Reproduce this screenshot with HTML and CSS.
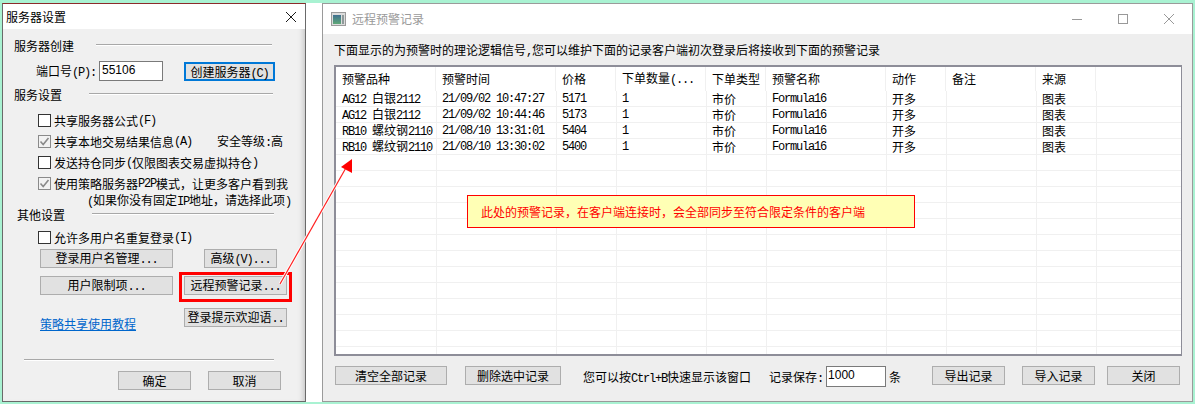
FILE: index.html
```html
<!DOCTYPE html>
<html lang="zh-CN">
<head>
    <meta charset="UTF-8">
    <title>远程预警记录</title>
    <link rel="stylesheet" href="styles.css">
</head>
<body>
    <div class="desktop">
        <!-- 服务器设置 -->
        <div class="dialog">
            <div class="dialog-title">
                <span>服务器设置</span>
                <svg class="dialog-close" width="12" height="12" viewBox="0 0 12 12"><path d="M1 1 L11 11 M11 1 L1 11" stroke="#1a1a1a" fill="none"/></svg>
            </div>
            <div class="dialog-body">
                <div class="group-head group-first">
                    <span>服务器创建</span><i class="group-line"></i>
                </div>
                <div class="port-row">
                    <span class="port-label">端口号<span class="en">(P):</span></span>
                    <div class="edit port-edit">55106</div>
                    <button class="btn btn-default">创建服务器<span class="en">(C)</span></button>
                </div>

                <div class="group-head group-second">
                    <span>服务设置</span><i class="group-line"></i>
                </div>
                <div class="check-list">
                    <div class="check"><i class="box"></i>共享服务器公式<span class="en">(F)</span></div>
                    <div class="check"><i class="box checked"><svg width="13" height="13" viewBox="0 0 13 13"><path d="M2.5 6.5 L5.2 9.5 L10.5 3" stroke="#8a8a8a" stroke-width="1.6" fill="none"/></svg></i>共享本地交易结果信息<span class="en">(A)</span><span class="level">安全等级<span class="en">:</span>高</span></div>
                    <div class="check"><i class="box"></i>发送持仓同步<span class="en">(</span>仅限图表交易虚拟持仓<span class="en">)</span></div>
                    <div class="check"><i class="box checked"><svg width="13" height="13" viewBox="0 0 13 13"><path d="M2.5 6.5 L5.2 9.5 L10.5 3" stroke="#8a8a8a" stroke-width="1.6" fill="none"/></svg></i>使用策略服务器<span class="en">P2P</span>模式，让更多客户看到我</div>
                </div>
                <div class="check-note"><span class="en">(</span>如果你没有固定<span class="en">IP</span>地址，请选择此项<span class="en">)</span></div>

                <div class="group-head group-other">
                    <span>其他设置</span><i class="group-line"></i>
                </div>
                <div class="check check-single"><i class="box"></i>允许多用户名重复登录<span class="en">(I)</span></div>

                <div class="btn-row btn-row-a">
                    <button class="btn btn-wide">登录用户名管理<span class="en">...</span></button>
                    <button class="btn btn-small">高级<span class="en">(V)...</span></button>
                </div>
                <div class="btn-row btn-row-b">
                    <button class="btn btn-wide">用户限制项<span class="en">...</span></button>
                    <button class="btn btn-mid">远程预警记录<span class="en">...</span></button>
                </div>
                <div class="btn-row btn-row-c">
                    <a class="tutorial" href="#">策略共享使用教程</a>
                    <button class="btn btn-mid">登录提示欢迎语<span class="en">..</span></button>
                </div>

                <div class="dialog-sep"></div>
                <div class="dialog-actions">
                    <button class="btn btn-action">确定</button>
                    <button class="btn btn-action">取消</button>
                </div>
            </div>
        </div>

        <div class="gap"></div>

        <!-- 远程预警记录 -->
        <div class="window">
            <div class="window-title">
                <svg class="window-icon" width="15" height="14" viewBox="0 0 15 14">
                    <defs>
                        <linearGradient id="icon-panel" x1="0" y1="0" x2="0" y2="1">
                            <stop offset="0" stop-color="#3f6f8f"/>
                            <stop offset="1" stop-color="#5fa877"/>
                        </linearGradient>
                    </defs>
                    <rect x="0.5" y="0.5" width="14" height="13" fill="#dcdcdc" stroke="#9a9a9a"/>
                    <rect x="2" y="3" width="8" height="9" fill="url(#icon-panel)"/>
                    <rect x="11" y="3" width="2" height="9" fill="#8f9a9a"/>
                </svg>
                <span class="window-name">远程预警记录</span>
                <div class="window-controls">
                    <svg width="12" height="12" viewBox="0 0 12 12"><path d="M1 6.5 H11" stroke="#999"/></svg>
                    <svg width="12" height="12" viewBox="0 0 12 12"><rect x="1.5" y="1.5" width="9" height="9" fill="none" stroke="#999"/></svg>
                    <svg width="12" height="12" viewBox="0 0 12 12"><path d="M1 1 L11 11 M11 1 L1 11" stroke="#999" fill="none"/></svg>
                </div>
            </div>
            <div class="window-body">
                <div class="hint">下面显示的为预警时的理论逻辑信号<span class="en">,</span>您可以维护下面的记录客户端初次登录后将接收到下面的预警记录</div>
                <div class="list">
                    <table>
                        <colgroup>
                            <col class="c1"><col class="c2"><col class="c3"><col class="c4"><col class="c5">
                            <col class="c6"><col class="c7"><col class="c8"><col class="c9"><col>
                        </colgroup>
                        <thead>
                            <tr><th>预警品种</th><th>预警时间</th><th>价格</th><th>下单数量<span class="en">(...</span></th><th>下单类型</th><th>预警名称</th><th>动作</th><th>备注</th><th>来源</th><th class="th-end"></th></tr>
                        </thead>
                        <tbody>
                            <tr><td><span class="en">AG12 </span>白银<span class="en">2112</span></td><td class="en">21/09/02 10:47:27</td><td class="en">5171</td><td class="en">1</td><td>市价</td><td class="en">Formula16</td><td>开多</td><td></td><td>图表</td><td></td></tr>
                            <tr><td><span class="en">AG12 </span>白银<span class="en">2112</span></td><td class="en">21/09/02 10:44:46</td><td class="en">5173</td><td class="en">1</td><td>市价</td><td class="en">Formula16</td><td>开多</td><td></td><td>图表</td><td></td></tr>
                            <tr><td><span class="en">RB10 </span>螺纹钢<span class="en">2110</span></td><td class="en">21/08/10 13:31:01</td><td class="en">5404</td><td class="en">1</td><td>市价</td><td class="en">Formula16</td><td>开多</td><td></td><td>图表</td><td></td></tr>
                            <tr><td><span class="en">RB10 </span>螺纹钢<span class="en">2110</span></td><td class="en">21/08/10 13:30:02</td><td class="en">5400</td><td class="en">1</td><td>市价</td><td class="en">Formula16</td><td>开多</td><td></td><td>图表</td><td></td></tr>
                            <tr><td></td><td></td><td></td><td></td><td></td><td></td><td></td><td></td><td></td><td></td></tr>
                            <tr><td></td><td></td><td></td><td></td><td></td><td></td><td></td><td></td><td></td><td></td></tr>
                            <tr><td></td><td></td><td></td><td></td><td></td><td></td><td></td><td></td><td></td><td></td></tr>
                            <tr><td></td><td></td><td></td><td></td><td></td><td></td><td></td><td></td><td></td><td></td></tr>
                            <tr><td></td><td></td><td></td><td></td><td></td><td></td><td></td><td></td><td></td><td></td></tr>
                            <tr><td></td><td></td><td></td><td></td><td></td><td></td><td></td><td></td><td></td><td></td></tr>
                            <tr><td></td><td></td><td></td><td></td><td></td><td></td><td></td><td></td><td></td><td></td></tr>
                            <tr><td></td><td></td><td></td><td></td><td></td><td></td><td></td><td></td><td></td><td></td></tr>
                            <tr><td></td><td></td><td></td><td></td><td></td><td></td><td></td><td></td><td></td><td></td></tr>
                            <tr><td></td><td></td><td></td><td></td><td></td><td></td><td></td><td></td><td></td><td></td></tr>
                            <tr><td></td><td></td><td></td><td></td><td></td><td></td><td></td><td></td><td></td><td></td></tr>
                            <tr><td></td><td></td><td></td><td></td><td></td><td></td><td></td><td></td><td></td><td></td></tr>
                            <tr><td></td><td></td><td></td><td></td><td></td><td></td><td></td><td></td><td></td><td></td></tr>
                        </tbody>
                    </table>
                </div>
                <div class="foot">
                    <button class="btn btn-clear">清空全部记录</button>
                    <button class="btn btn-delete">删除选中记录</button>
                    <span class="foot-text foot-tip">您可以按<span class="en">Ctrl+B</span>快速显示该窗口</span>
                    <span class="foot-text foot-keep">记录保存<span class="en">:</span></span>
                    <div class="edit keep-edit">1000</div>
                    <span class="foot-text foot-unit">条</span>
                    <button class="btn btn-action btn-export">导出记录</button>
                    <button class="btn btn-action btn-import">导入记录</button>
                    <button class="btn btn-action btn-close">关闭</button>
                </div>
            </div>
        </div>
    </div>

    <!-- annotations drawn over the two windows -->
    <div class="mark-box"></div>
    <div class="note">此处的预警记录，在客户端连接时，会全部同步至符合限定条件的客户端</div>
    <svg class="mark-arrow" width="90" height="150" viewBox="0 0 90 150">
        <path d="M10 134 L77 16" stroke="#fff" stroke-width="3" fill="none"/>
        <path d="M10 134 L77 16" stroke="#ff2020" stroke-width="1.2" fill="none"/>
        <path d="M82 9 L71 17 L82 23 Z" fill="#ff0000"/>
    </svg>
</body>
</html>
```

FILE: styles.css
```css
* {
    margin: 0;
    padding: 0;
    box-sizing: border-box;
}

body {
    width: 1195px;
    height: 404px;
    overflow: hidden;
    position: relative;
    padding-top: 3px;
    background-color: #a9f2d2;
    font-family: "Noto Sans CJK SC", sans-serif;
    font-size: 12px;
    line-height: 16px;
    color: #000;
}

/* latin runs: half the width of a CJK glyph, like the old bitmap font */
.en {
    font-family: "Liberation Mono", monospace;
    letter-spacing: -1.2px;
}

.desktop {
    display: flex;
    height: 399px;
    padding-left: 2px;
}

.gap {
    width: 16px;
    background-color: #fff;
}

button {
    font: inherit;
    color: inherit;
}

.btn {
    display: block;
    height: 19px;
    line-height: 15px;
    background-color: #e1e1e1;
    border: 1px solid #adadad;
    white-space: nowrap;
}

.btn-default {
    width: 91px;
    margin-top: 1px;
    border: 2px solid #0078d7;
}

.btn-wide { width: 133px; }
.btn-small { width: 73px; }
.btn-mid { width: 103px; }
.btn-action { width: 73px; }

.edit {
    background-color: #fff;
    border: 1px solid #7a7a7a;
    font-family: "Liberation Sans", sans-serif;
}

/* left dialog */
.dialog {
    width: 304px;
    border: 1px solid #6a6a6a;
    border-top-color: #8c2a2a;
    background-color: #f0f0f0;
    box-shadow: inset -6px 0 6px -5px rgba(0,0,0,0.22);
}

.dialog-title {
    height: 25px;
    padding-left: 3px;
    display: flex;
    justify-content: space-between;
    align-items: center;
    background-color: #fff;
}

.dialog-close {
    margin-right: 8px;
}

.dialog-body {
    padding-top: 9px;
}

.group-head {
    display: flex;
    align-items: center;
    height: 16px;
    padding-left: 11px;
    gap: 27px;
}

.group-first { gap: 22px; margin-right: 33px; }
.group-second { margin-top: 6px; margin-right: 32px; }
.group-other { padding-left: 14px; margin-right: 31px; }

.group-line {
    flex: 1;
    height: 2px;
    margin-top: -3px;
    background-color: #a8a8a8;
    border-bottom: 1px solid #fff;
}

.port-row {
    display: flex;
    height: 20px;
    margin-top: 7px;
    padding-left: 33px;
}

.port-label {
    width: 63px;
    line-height: 20px;
}

.port-edit {
    width: 64px;
    margin-right: 21px;
    padding-left: 2px;
    line-height: 16px;
}

.check-list {
    display: flex;
    flex-direction: column;
    gap: 5px;
    margin-top: 10px;
}

.check {
    display: flex;
    align-items: center;
    height: 16px;
    padding-left: 35px;
    white-space: pre;
}

.check-single {
    margin-top: 7px;
}

.box {
    display: block;
    flex: none;
    width: 13px;
    height: 13px;
    margin-right: 3px;
    margin-top: -1px;
    background-color: #fff;
    border: 1px solid #333;
}

.box.checked {
    border-color: #8a8a8a;
    background-color: #f2f2f2;
}

.box svg {
    display: block;
    margin: -1px;
}

.level {
    margin-left: 25px;
}

.check-note {
    height: 15px;
    padding-left: 84px;
    line-height: 15px;
    white-space: pre;
}

.btn-row {
    display: flex;
    justify-content: space-between;
    padding-left: 37px;
}

.btn-row-a { margin-top: 3px; padding-right: 28px; }
.btn-row-b { margin-top: 8px; padding-right: 18px; }

.btn-row-c {
    margin-top: 13px;
    height: 24px;
    padding-right: 18px;
}

.tutorial {
    align-self: flex-end;
    color: #0066cc;
}

.dialog-sep {
    height: 2px;
    margin: 27px 31px 0 21px;
    background-color: #a8a8a8;
    border-bottom: 1px solid #fff;
}

.dialog-actions {
    display: flex;
    gap: 17px;
    margin-top: 10px;
    padding-left: 115px;
}

/* right window */
.window {
    width: 871px;
    border: 1px solid #9a9a9a;
    background-color: #eeeeee;
}

.window-title {
    display: flex;
    align-items: center;
    height: 30px;
    padding-left: 8px;
    background-color: #fff;
}

.window-icon {
    margin-right: 6px;
}

.window-name {
    color: #9a9a9a;
}

.window-controls {
    display: flex;
    gap: 34px;
    margin-left: auto;
    margin-right: 17px;
}

.window-body {
    padding: 8px 0 0 11px;
}

.hint {
    height: 16px;
    white-space: pre;
}

.list {
    width: 848px;
    height: 291px;
    margin-top: 7px;
    overflow: hidden;
    background-color: #fff;
    border: 2px solid #8d8d98;
    border-right-width: 1px;
}

table {
    width: 100%;
    table-layout: fixed;
    border-collapse: separate;
    border-spacing: 0;
}

.c1 { width: 100px; }
.c2 { width: 120px; }
.c3 { width: 60px; }
.c4 { width: 90px; }
.c5 { width: 60px; }
.c6 { width: 120px; }
.c7 { width: 60px; }
.c8 { width: 90px; }
.c9 { width: 60px; }

th {
    height: 24px;
    padding-left: 6px;
    font-weight: normal;
    text-align: left;
    white-space: nowrap;
    border-right: 1px solid #f0f0f0;
}

.th-end {
    border-right: none;
}

td {
    height: 16px;
    padding-top: 1px;
    padding-left: 5px;
    line-height: 12px;
    white-space: pre;
    border-left: 1px solid #f0f0f0;
    border-bottom: 1px solid #f0f0f0;
}

td:first-child {
    padding-left: 6px;
    border-left: none;
}

.foot {
    display: flex;
    align-items: flex-start;
    margin-top: 10px;
}

.foot-text {
    line-height: 21px;
    white-space: pre;
}

.btn-clear { width: 112px; margin-left: 1px; }
.btn-delete { width: 96px; margin-left: 18px; }
.foot-tip { margin-left: 22px; }
.foot-keep { margin-left: 18px; }

.keep-edit {
    width: 60px;
    height: 21px;
    margin-left: 3px;
    padding-left: 1px;
    line-height: 17px;
}

.foot-unit { margin-left: 3px; }
.btn-export { margin-left: 31px; }
.btn-import { margin-left: 17px; }
.btn-close { margin-left: 12px; }

/* annotations */
.mark-box {
    position: absolute;
    left: 179px;
    top: 272px;
    width: 113px;
    height: 30px;
    border: 3px solid #ff0000;
}

.note {
    position: absolute;
    left: 467px;
    top: 195px;
    width: 448px;
    height: 33px;
    padding-left: 13px;
    line-height: 31px;
    color: #ff0000;
    background-color: #ffffb5;
    border: 1px solid #ff0000;
}

.mark-arrow {
    position: absolute;
    left: 270px;
    top: 150px;
}
```
